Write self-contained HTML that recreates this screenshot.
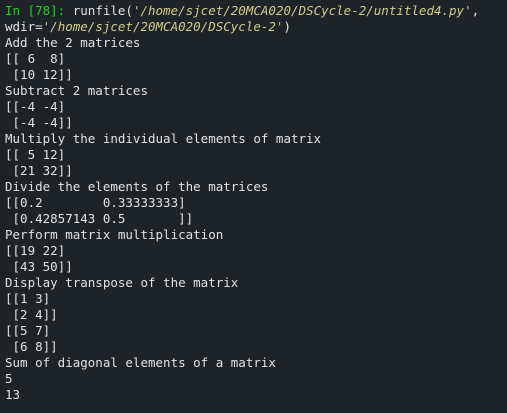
<!DOCTYPE html>
<html><head><style>
html,body{margin:0;padding:0;background:#1e2328;width:507px;height:413px;overflow:hidden}
pre{margin:0;padding:3px 0 0 5px;font-family:"DejaVu Sans Mono","Liberation Mono",monospace;font-size:12.5px;line-height:16px;color:#e2e2e2}
.g{color:#1fd31f}.s{color:#d2cd8a;font-style:italic}
</style></head><body><pre><span class="g">In [78]:</span> runfile(<span class="s">'/home/sjcet/20MCA020/DSCycle-2/untitled4.py'</span>,
wdir=<span class="s">'/home/sjcet/20MCA020/DSCycle-2'</span>)
Add the 2 matrices
[[ 6  8]
 [10 12]]
Subtract 2 matrices
[[-4 -4]
 [-4 -4]]
Multiply the individual elements of matrix
[[ 5 12]
 [21 32]]
Divide the elements of the matrices
[[0.2        0.33333333]
 [0.42857143 0.5       ]]
Perform matrix multiplication
[[19 22]
 [43 50]]
Display transpose of the matrix
[[1 3]
 [2 4]]
[[5 7]
 [6 8]]
Sum of diagonal elements of a matrix
5
13</pre></body></html>
